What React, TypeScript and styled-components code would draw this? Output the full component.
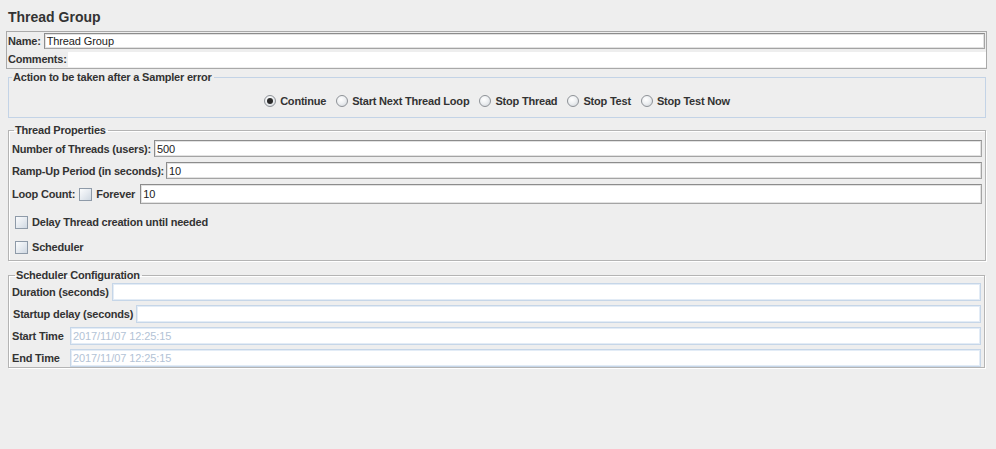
import React from 'react';
import styled, { createGlobalStyle } from 'styled-components';

const GlobalStyle = createGlobalStyle`
  html, body {
    margin: 0;
    padding: 0;
    background: #eeeeee;
  }
  body {
    font-family: "Liberation Sans", Arial, sans-serif;
    font-size: 11px;
    color: #333333;
  }
`;

const Page = styled.div`
  box-sizing: border-box;
  width: 996px;
  height: 449px;
  padding: 8px 9px 0 6px;
  background: #eeeeee;
`;

const Title = styled.h1`
  margin: 0 0 5px 2px;
  font-size: 14px;
  line-height: 18px;
  font-weight: bold;
  color: #333333;
`;

const NameBox = styled.div`
  border: 1px solid #a9a9a9;
  padding: 0 0 0 1px;
`;

interface RowProps {
  $height?: number;
  $gap?: number;
  $indent?: number;
}

const Row = styled.div<RowProps>`
  display: flex;
  align-items: center;
  height: ${p => p.$height ?? 18}px;
  gap: ${p => p.$gap ?? 3}px;
  padding-left: ${p => p.$indent ?? 0}px;
`;

interface LabelProps {
  $width?: number;
}

const Label = styled.span<LabelProps>`
  font-weight: bold;
  font-size: 11px;
  letter-spacing: -0.2px;
  color: #333333;
  white-space: nowrap;
  ${p => (p.$width ? `width: ${p.$width}px; flex: none;` : '')}
`;

type Tone = 'grey' | 'blue' | 'plain';

interface FieldProps {
  $tone: Tone;
  $height?: number;
}

const borderFor = (tone: Tone) => {
  if (tone === 'grey') {
    return `border: 1px solid #a4a4a4; border-top-color: #8c8c8c; border-left-color: #8c8c8c; box-shadow: inset 0 0 0 1px #e2e2e2;`;
  }
  if (tone === 'blue') {
    return `border: 1px solid #c6d6e8; box-shadow: inset 0 0 0 1px #e3ecf6;`;
  }
  return `border: none;`;
};

const Field = styled.div<FieldProps>`
  box-sizing: border-box;
  flex: 1;
  min-width: 0;
  height: ${p => p.$height ?? 17}px;
  display: flex;
  align-items: center;
  padding: 0 2px;
  background: #ffffff;
  font-size: 11px;
  letter-spacing: -0.1px;
  color: #222222;
  white-space: nowrap;
  ${p => borderFor(p.$tone)}
`;

const Hint = styled.span`
  color: #b3c3d6;
`;

interface PanelProps {
  $accent?: boolean;
  $top: number;
  $right?: number;
  $pad?: string;
}

const Panel = styled.fieldset<PanelProps>`
  margin: ${p => p.$top}px ${p => p.$right ?? 1}px 0 2px;
  padding: ${p => p.$pad ?? '4px 3px 3px 3px'};
  min-width: 0;
  border: 1px solid ${p => (p.$accent ? '#c3d3e6' : '#b4b4b4')};
  box-shadow: ${p => (p.$accent ? 'none' : 'inset 1px 1px 0 #ffffff, 1px 1px 0 #ffffff')};
  display: flex;
  flex-direction: column;
`;

interface LegendProps {
  $indent?: number;
}

const Legend = styled.legend<LegendProps>`
  margin-left: ${p => p.$indent ?? 0}px;
  padding: 0 2px 0 1px;
  font-weight: bold;
  font-size: 11px;
  letter-spacing: -0.2px;
  line-height: 14px;
  color: #333333;
`;

const RadioGroup = styled.div`
  display: flex;
  justify-content: center;
  align-items: center;
  gap: 10px;
  height: 14px;
  margin: 6px 0 6px;
`;

const RadioItem = styled.label`
  display: flex;
  align-items: center;
  gap: 4px;
  font-weight: bold;
  font-size: 11px;
  letter-spacing: -0.2px;
  color: #333333;
`;

interface RadioProps {
  $on?: boolean;
}

const Radio = styled.span<RadioProps>`
  box-sizing: border-box;
  width: 12px;
  height: 12px;
  border-radius: 50%;
  border: 1px solid #8e9297;
  background: radial-gradient(circle at 40% 35%, #ffffff 0%, #eef0f2 45%, #cdd2d8 100%);
  display: flex;
  align-items: center;
  justify-content: center;

  &::after {
    content: '';
    width: 6px;
    height: 6px;
    border-radius: 50%;
    background: #2a2a2a;
    display: ${p => (p.$on ? 'block' : 'none')};
  }
`;

const CheckBox = styled.span`
  box-sizing: border-box;
  flex: none;
  width: 13px;
  height: 13px;
  border: 1px solid #8e9aa8;
  background: linear-gradient(135deg, #fbfcfd 0%, #e4e9ef 55%, #cfd8e2 100%);
`;

const CheckLabel = styled.label`
  display: flex;
  align-items: center;
  gap: 4px;
  font-weight: bold;
  font-size: 11px;
  letter-spacing: -0.2px;
  color: #333333;
`;

const Stack = styled.div<{ $gap: number }>`
  display: flex;
  flex-direction: column;
  gap: ${p => p.$gap}px;
`;

const actions = [
  { label: 'Continue', on: true },
  { label: 'Start Next Thread Loop' },
  { label: 'Stop Thread' },
  { label: 'Stop Test' },
  { label: 'Stop Test Now' },
];

export default function App() {
  return (
    <Page>
      <GlobalStyle />
      <Title>Thread Group</Title>

      <NameBox>
        <Row $gap={3}>
          <Label>Name:</Label>
          <Field $tone="grey" $height={16} style={{ marginRight: 1 }}>Thread Group</Field>
        </Row>
        <Row $gap={1}>
          <Label>Comments:</Label>
          <Field $tone="plain" $height={15} />
        </Row>
      </NameBox>

      <Panel $accent $top={1}>
        <Legend>Action to be taken after a Sampler error</Legend>
        <RadioGroup>
          {actions.map(a => (
            <RadioItem key={a.label}>
              <Radio $on={a.on} />
              {a.label}
            </RadioItem>
          ))}
        </RadioGroup>
      </Panel>

      <Panel $top={5} $pad="3px 3px 5px 3px">
        <Legend $indent={2}>Thread Properties</Legend>
        <Stack $gap={5}>
          <Row $height={17}>
            <Label>Number of Threads (users):</Label>
            <Field $tone="grey">500</Field>
          </Row>
          <Row $height={17} $gap={2}>
            <Label>Ramp-Up Period (in seconds):</Label>
            <Field $tone="grey">10</Field>
          </Row>
          <Row $height={20} $gap={0}>
            <Label>Loop Count:</Label>
            <CheckLabel style={{ margin: '0 5px 0 4px' }}>
              <CheckBox />
              Forever
            </CheckLabel>
            <Field $tone="grey" $height={20}>10</Field>
          </Row>
        </Stack>
        <Stack $gap={9} style={{ margin: '10px 0 0' }}>
          <Row $height={16} $indent={3}>
            <CheckLabel>
              <CheckBox />
              Delay Thread creation until needed
            </CheckLabel>
          </Row>
          <Row $height={16} $indent={3}>
            <CheckLabel>
              <CheckBox />
              Scheduler
            </CheckLabel>
          </Row>
        </Stack>
      </Panel>

      <Panel $top={7} $right={2} $pad="1px 3px 0 3px">
        <Legend $indent={3}>Scheduler Configuration</Legend>
        <Stack $gap={4}>
          <Row $height={18}>
            <Label>Duration (seconds)</Label>
            <Field $tone="blue" $height={18} />
          </Row>
          <Row $height={18} $indent={1}>
            <Label>Startup delay (seconds)</Label>
            <Field $tone="blue" $height={18} />
          </Row>
          <Row $height={18}>
            <Label $width={55}>Start Time</Label>
            <Field $tone="blue" $height={18}><Hint>2017/11/07 12:25:15</Hint></Field>
          </Row>
          <Row $height={18}>
            <Label $width={55}>End Time</Label>
            <Field $tone="blue" $height={18}><Hint>2017/11/07 12:25:15</Hint></Field>
          </Row>
        </Stack>
      </Panel>
    </Page>
  );
}
